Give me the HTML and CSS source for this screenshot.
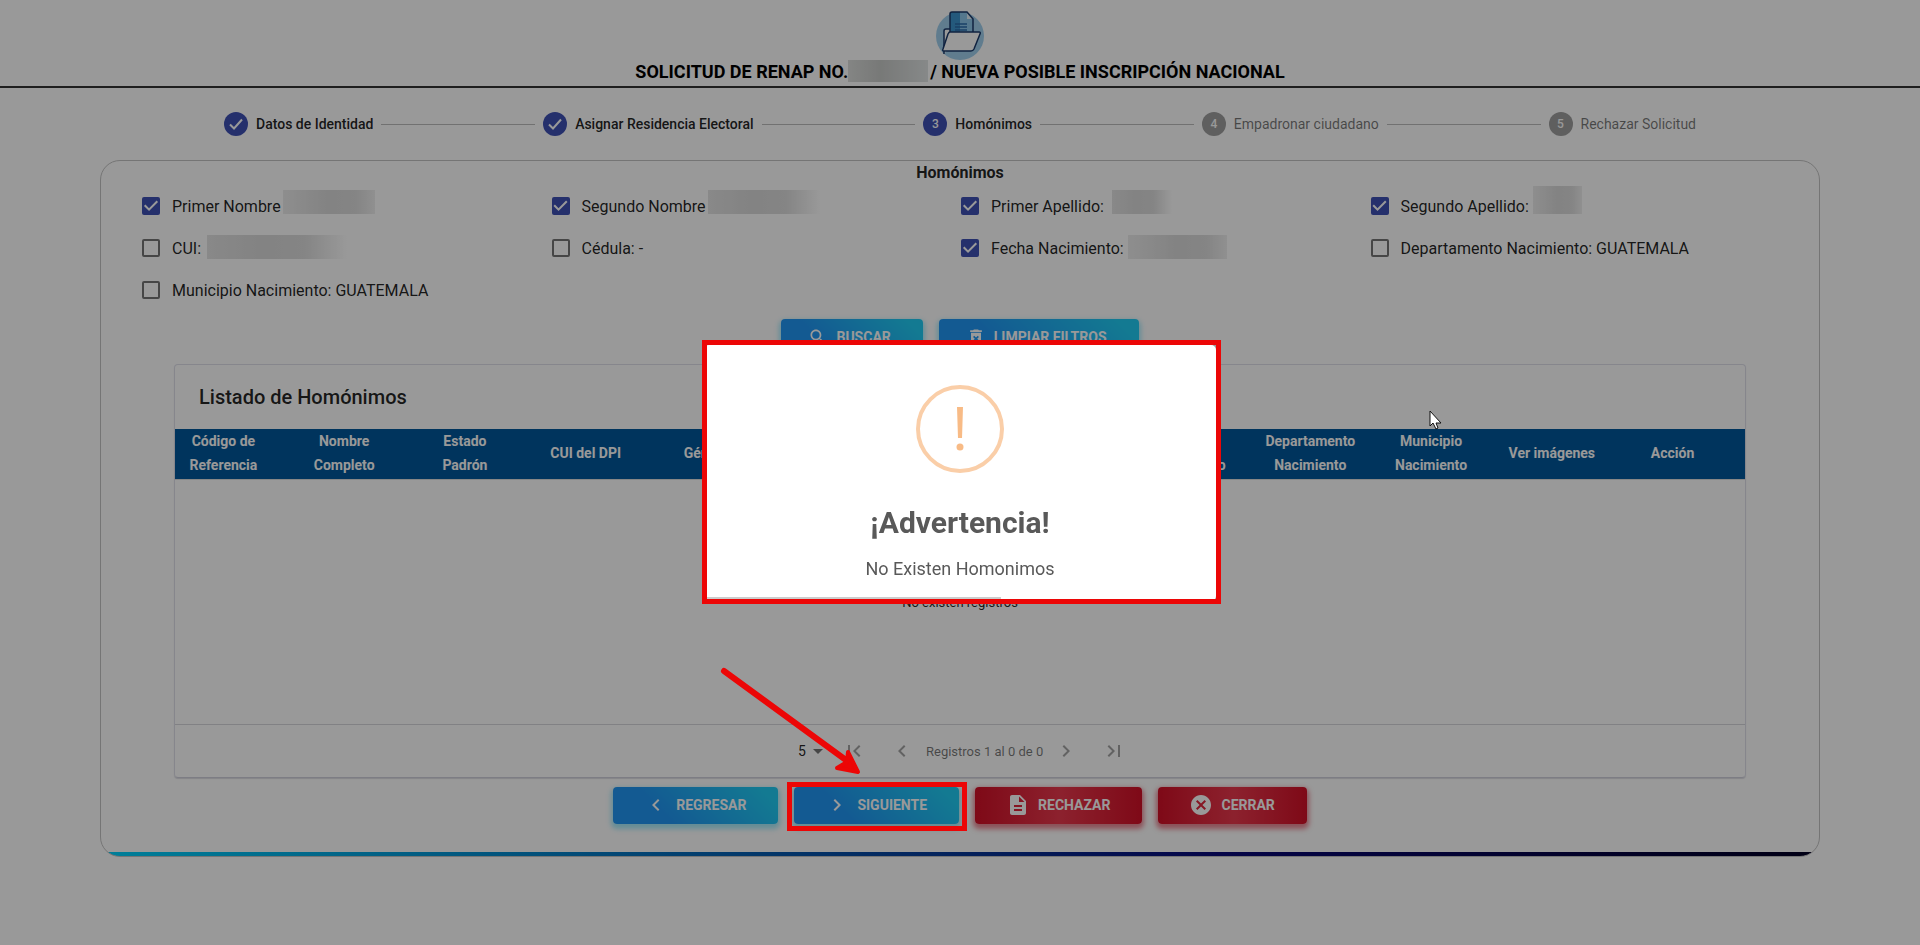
FILE: index.html
```html
<!DOCTYPE html>
<html lang="es">
<head>
    <meta charset="UTF-8">
    <meta name="viewport" content="width=device-width, initial-scale=1.0">
    <title>Homónimos</title>
    <link rel="stylesheet" href="styles.css">
</head>
<body>
    <header class="header">
        <svg class="logo" width="50" height="50" viewBox="0 0 50 50">
            <circle cx="25" cy="26" r="24" fill="#a0cfed"/>
            <path d="M9 44V21q0-2 2-2h6v16M36 25h3q2 0 2 2v6" fill="#fff" stroke="#1b3a6b" stroke-width="1.5"/>
            <path d="M15 36V4q0-2 2-2h15l6 7v27z" fill="#8cc6ec"/>
            <path d="M15 36V4q0-2 2-2h8v34z" fill="#3d94cf"/>
            <path d="M32 2v7h6z" fill="#e4f2fb"/>
            <path d="M15 36V4q0-2 2-2h15l6 7v27" fill="none" stroke="#1b3a6b" stroke-width="1.5"/>
            <path d="M20 14h12M20 17h12M20 20h12" stroke="#2b6cab" stroke-width="1.5"/>
            <path d="M15 22h29q2 0 1 2l-6 15q-1 2-3 2H9q-2 0-1-2l5-15q1-2 2-2z" fill="#fff" stroke="#1b3a6b" stroke-width="1.5"/>
        </svg>
        <h1 class="title">SOLICITUD DE RENAP NO.<span class="mask mask-title"></span>/ NUEVA POSIBLE INSCRIPCIÓN NACIONAL</h1>
    </header>

    <ol class="stepper">
        <li class="step done"><span class="step-icon"><svg width="24" height="24" viewBox="0 0 24 24"><path fill="none" stroke="#fff" stroke-width="2" d="M6 12.500l4 4 8-9"/></svg></span>Datos de Identidad</li>
        <li class="connector"></li>
        <li class="step done"><span class="step-icon"><svg width="24" height="24" viewBox="0 0 24 24"><path fill="none" stroke="#fff" stroke-width="2" d="M6 12.500l4 4 8-9"/></svg></span>Asignar Residencia Electoral</li>
        <li class="connector"></li>
        <li class="step done"><span class="step-icon">3</span>Homónimos</li>
        <li class="connector"></li>
        <li class="step"><span class="step-icon">4</span>Empadronar ciudadano</li>
        <li class="connector"></li>
        <li class="step"><span class="step-icon">5</span>Rechazar Solicitud</li>
    </ol>

    <main class="panel">
        <h2 class="panel-title">Homónimos</h2>

        <div class="filters">
            <label class="filter"><input type="checkbox" checked>Primer Nombre<span class="mask mask-name"></span></label>
            <label class="filter"><input type="checkbox" checked>Segundo Nombre<span class="mask mask-second-name fade"></span></label>
            <label class="filter"><input type="checkbox" checked>Primer Apellido:&nbsp;<span class="mask mask-surname fade"></span></label>
            <label class="filter"><input type="checkbox" checked>Segundo Apellido:<span class="mask mask-second-surname"></span></label>
            <label class="filter"><input type="checkbox">CUI:&nbsp;<span class="mask mask-cui fade low"></span></label>
            <label class="filter"><input type="checkbox">Cédula: -</label>
            <label class="filter"><input type="checkbox" checked>Fecha Nacimiento:<span class="mask mask-date low"></span></label>
            <label class="filter"><input type="checkbox">Departamento Nacimiento: GUATEMALA</label>
            <label class="filter"><input type="checkbox">Municipio Nacimiento: GUATEMALA</label>
        </div>

        <div class="buttons">
            <button class="button small-icon"><svg width="20" height="20" viewBox="0 0 24 24"><path d="M15.500 14h-.79l-.28-.27C15.410 12.590 16 11.110 16 9.500 16 5.910 13.090 3 9.500 3S3 5.910 3 9.500 5.910 16 9.500 16c1.610 0 3.090-.59 4.230-1.570l.27.28v.79l5 4.990L20.490 19l-4.990-5zm-6 0C7.010 14 5 11.990 5 9.500S7.010 5 9.500 5 14 7.010 14 9.500 11.990 14 9.500 14z"/></svg>BUSCAR</button>
            <button class="button small-icon"><svg width="20" height="20" viewBox="0 0 24 24"><path d="M6 19c0 1.100.9 2 2 2h8c1.100 0 2-.9 2-2V7H6v12zm2.460-7.120l1.410-1.410L12 12.590l2.120-2.120 1.410 1.410L13.410 14l2.120 2.120-1.410 1.410L12 15.410l-2.120 2.120-1.410-1.410L10.590 14l-2.130-2.120zM15.500 4l-1-1h-5l-1 1H5v2h14V4z"/></svg>LIMPIAR FILTROS</button>
        </div>

        <section class="listing">
            <h3 class="listing-title">Listado de Homónimos</h3>
            <table>
                <thead>
                    <tr>
                        <th>Código de Referencia</th>
                        <th>Nombre Completo</th>
                        <th>Estado<br>Padrón</th>
                        <th>CUI del DPI</th>
                        <th>Género</th>
                        <th></th>
                        <th></th>
                        <th></th>
                        <th>Fecha Nacimiento</th>
                        <th>Departamento Nacimiento</th>
                        <th>Municipio Nacimiento</th>
                        <th>Ver imágenes</th>
                        <th>Acción</th>
                    </tr>
                </thead>
                <tbody>
                    <tr>
                        <td colspan="13">No existen registros</td>
                    </tr>
                </tbody>
            </table>
            <div class="pagination">
                <div class="page-size">
                    <select aria-label="Registros por página"><option>5</option></select>
                    <svg width="24" height="24" viewBox="0 0 24 24"><path d="M7 10l5 5 5-5z"/></svg>
                </div>
                <button class="page-button" aria-label="Primera" disabled><svg width="24" height="24" viewBox="0 0 24 24"><path d="M18.410 16.590L13.820 12l4.590-4.590L17 6l-6 6 6 6zM6 6h2v12H6z"/></svg></button>
                <button class="page-button" aria-label="Anterior" disabled><svg width="24" height="24" viewBox="0 0 24 24"><path d="M15.410 7.410L14 6l-6 6 6 6 1.410-1.410L10.830 12z"/></svg></button>
                <span class="page-info">Registros 1 al 0 de 0</span>
                <button class="page-button" aria-label="Siguiente" disabled><svg width="24" height="24" viewBox="0 0 24 24"><path d="M10 6L8.590 7.410 13.170 12l-4.580 4.590L10 18l6-6z"/></svg></button>
                <button class="page-button" aria-label="Última" disabled><svg width="24" height="24" viewBox="0 0 24 24"><path d="M5.590 7.410L10.180 12l-4.590 4.590L7 18l6-6-6-6zM16 6h2v12h-2z"/></svg></button>
            </div>
        </section>

        <div class="buttons actions">
            <button class="button"><svg width="24" height="24" viewBox="0 0 24 24"><path d="M15.410 7.410L14 6l-6 6 6 6 1.410-1.410L10.830 12z"/></svg>REGRESAR</button>
            <div class="marked">
                <button class="button"><svg width="24" height="24" viewBox="0 0 24 24"><path d="M10 6L8.590 7.410 13.170 12l-4.580 4.590L10 18l6-6z"/></svg>SIGUIENTE</button>
                <span class="mark"></span>
                <svg class="arrow" width="150" height="112" viewBox="0 0 150 112">
                    <path d="M6 6L132 98" fill="none" stroke="#ec0606" stroke-width="6" stroke-linecap="round"/>
                    <path d="M130 87L140 107L119 103L129 97Z" fill="#ec0606" stroke="#ec0606" stroke-width="4" stroke-linejoin="round"/>
                </svg>
            </div>
            <button class="button danger"><svg width="24" height="24" viewBox="0 0 24 24"><path d="M14 2H6c-1.100 0-1.990.9-1.990 2L4 20c0 1.100.89 2 1.990 2H18c1.100 0 2-.9 2-2V8l-6-6zm2 16H8v-2h8v2zm0-4H8v-2h8v2zm-3-5V3.500L18.500 9H13z"/></svg>RECHAZAR</button>
            <button class="button danger"><svg width="24" height="24" viewBox="0 0 24 24"><path d="M12 2C6.470 2 2 6.470 2 12s4.470 10 10 10 10-4.470 10-10S17.530 2 12 2zm5 13.590L15.590 17 12 13.410 8.410 17 7 15.590 10.590 12 7 8.410 8.410 7 12 10.590 15.590 7 17 8.410 13.410 12 17 15.590z"/></svg>CERRAR</button>
        </div>
    </main>

    <div class="overlay">
        <div class="popup" role="dialog" aria-labelledby="popupTitle">
            <svg class="popup-icon" width="88" height="88" viewBox="0 0 88 88">
                <circle cx="44" cy="44" r="42" fill="none" stroke="#facea8" stroke-width="4"/>
                <path d="M41 22h6l-1 31h-4z" fill="#f8bb86"/>
                <circle cx="44" cy="62" r="3.500" fill="#f8bb86"/>
            </svg>
            <h2 class="popup-title" id="popupTitle">¡Advertencia!</h2>
            <div class="popup-text">No Existen Homonimos</div>
            <div class="timer"></div>
            <span class="popup-mark"></span>
        </div>
        <svg class="cursor" width="14" height="20" viewBox="0 0 14 20">
            <path d="M1 1v15l3-3 3 6 2-1-2-5h5z" fill="#fff" stroke="#111" stroke-width="1"/>
        </svg>
    </div>
</body>
</html>
```
FILE: styles.css
```css
* {
    box-sizing: border-box;
}

body {
    margin: 0;
    font-family: Roboto, sans-serif;
    font-size: 16px;
    color: rgba(0, 0, 0, 0.87);
    background-color: #fff;
}

h1, h2, h3 {
    margin: 0;
}

.header {
    display: flex;
    flex-direction: column;
    align-items: center;
    height: 88px;
    padding-top: 10px;
    border-bottom: 2px solid #333;
}

.logo {
    flex: none;
}

.title {
    display: flex;
    align-items: center;
    font-size: 18px;
    font-weight: 700;
    line-height: 22px;
    color: #000;
}

/* Hidden personal data */
.mask {
    flex: none;
    height: 24px;
    align-self: flex-end;
    margin: 0 0 13px 2px;
    background: linear-gradient(90deg, #ededed, #dadada 50%, #dedede 80%, #f0f0f0);
}

.mask.fade {
    background: linear-gradient(90deg, #e4e4e4, #dadada 40%, #dedede 70%, #fff);
}

.mask.low {
    margin-bottom: 10px;
}

.mask-title {
    width: 80px;
    height: 22px;
    margin: 0 2px 2px 0;
    background: linear-gradient(90deg, #dcdedc, #c8cac8 40%, #e0e4e4);
}

.mask-name {
    width: 92px;
}

.mask-second-name {
    width: 112px;
}

.mask-surname {
    width: 60px;
    margin-left: 4px;
}

.mask-second-surname {
    width: 49px;
    height: 28px;
    margin-left: 4px;
}

.mask-cui {
    width: 140px;
}

.mask-date {
    width: 99px;
    margin-left: 4px;
}

/* Stepper */
.stepper {
    display: flex;
    align-items: center;
    width: 80%;
    margin: 0 auto;
    padding: 24px;
    list-style: none;
}

.step {
    display: flex;
    align-items: center;
    gap: 8px;
    padding: 0 8px;
    font-size: 14px;
    line-height: 24px;
    color: rgba(0, 0, 0, 0.54);
}

.step-icon {
    display: flex;
    align-items: center;
    justify-content: center;
    width: 24px;
    height: 24px;
    border-radius: 50%;
    font-size: 12px;
    font-weight: 500;
    color: #fff;
    background-color: #9e9e9e;
}

.step.done {
    font-weight: 500;
    color: rgba(0, 0, 0, 0.87);
}

.step.done .step-icon {
    background-color: #3f51b5;
}

.connector {
    flex: 1;
    border-top: 1px solid #bdbdbd;
}

/* Panel */
.panel {
    margin: 0 100px;
    padding-bottom: 32px;
    border: 1px solid #c4c4c4;
    border-radius: 20px;
    background: linear-gradient(270deg, #020024 0%, #090979 35%, #00d4ff 100%) bottom / 100% 4px no-repeat;
}

.panel-title {
    font-size: 16px;
    font-weight: 700;
    line-height: 24px;
    text-align: center;
}

.filters {
    display: grid;
    grid-template-columns: repeat(4, 1fr);
    padding: 0 40px;
}

.filter {
    display: flex;
    align-items: center;
    height: 42px;
    white-space: nowrap;
}

.filter input {
    appearance: none;
    width: 18px;
    height: 18px;
    margin: 0 12px 0 1px;
    border: 2px solid rgba(0, 0, 0, 0.54);
    border-radius: 2px;
}

.filter input:checked {
    border: 0;
    background-color: #3f51b5;
}

.filter input:checked::after {
    content: "";
    display: block;
    height: 18px;
    background-color: #fff;
    clip-path: polygon(39% 78%, 11% 50%, 19% 42%, 39% 62%, 81% 20%, 89% 28%);
}

/* Buttons */
.buttons {
    display: flex;
    justify-content: center;
    gap: 16px;
    padding: 8px 0;
}

.actions {
    padding: 9px 0 0;
}

.button {
    display: flex;
    align-items: center;
    gap: 8px;
    height: 37px;
    padding: 0 32px 2px 31px;
    border: 0;
    border-radius: 4px;
    font-family: inherit;
    font-size: 14px;
    font-weight: 700;
    color: #fff;
    background: linear-gradient(45deg, #2196f3 30%, #21cbf3 90%);
    box-shadow: 0 3px 5px 2px rgba(33, 203, 243, 0.4);
}

.button.small-icon {
    padding-left: 27px;
}

.button.danger {
    background: linear-gradient(90deg, #d31027, #ea384d 51%, #d31027);
    box-shadow: 0 3px 5px 2px rgba(211, 16, 39, 0.5);
}

.button svg {
    fill: #fff;
}

/* Listing */
.listing {
    margin: 0 73px;
    border: 1px solid #e0e0ea;
    border-bottom-color: #d0d0dc;
    border-radius: 4px;
    box-shadow: 0 1px 1px rgba(0, 0, 40, 0.14);
}

.listing-title {
    padding: 0 24px;
    font-size: 20px;
    font-weight: 500;
    line-height: 64px;
}

table {
    width: 100%;
    table-layout: fixed;
    border-collapse: collapse;
}

th {
    height: 50px;
    padding: 0 24px 2px 0;
    font-size: 14px;
    font-weight: 700;
    line-height: 24px;
    color: #fff;
    background-color: #01579b;
}

td {
    height: 245px;
    padding: 0;
    font-size: 13px;
    text-align: center;
    border-top: 1px solid #e0e0e0;
    border-bottom: 1px solid #d8d8dc;
}

.pagination {
    display: flex;
    align-items: center;
    justify-content: center;
    height: 52px;
}

.page-size {
    display: flex;
    align-items: center;
    width: 48px;
    padding-left: 16px;
}

.page-size select {
    appearance: none;
    width: 8px;
    padding: 0;
    border: 0;
    font-family: inherit;
    font-size: 14px;
    color: inherit;
    background: none;
}

.page-size svg {
    flex: none;
    fill: rgba(0, 0, 0, 0.54);
}

.page-button {
    width: 48px;
    height: 48px;
    padding: 12px;
    border: 0;
    background: none;
}

.page-button svg {
    fill: rgba(0, 0, 0, 0.36);
}

.page-info {
    width: 116px;
    font-size: 13px;
    text-align: center;
    white-space: nowrap;
    color: rgba(0, 0, 0, 0.54);
}

/* Red marks, drawn above the overlay */
.marked {
    position: relative;
}

.mark {
    position: absolute;
    z-index: 20;
    inset: -5px -8px -7px -7px;
    border: 5px solid #ec0606;
}

.arrow {
    position: absolute;
    z-index: 20;
    left: -76px;
    top: -122px;
}

/* Alert */
.overlay {
    position: fixed;
    z-index: 10;
    inset: 0;
    display: flex;
    align-items: center;
    justify-content: center;
    background-color: rgba(0, 0, 0, 0.4);
}

.popup {
    position: relative;
    display: flex;
    flex-direction: column;
    align-items: center;
    width: 512px;
    padding-top: 40px;
    border-radius: 5px;
    color: #595959;
    background-color: #fff;
}

.popup-title {
    margin-top: 30px;
    font-size: 30px;
    font-weight: 700;
    line-height: 40px;
}

.popup-text {
    margin: 14px 0 16px;
    font-size: 18px;
    line-height: 24px;
}

.timer {
    align-self: flex-start;
    width: 58%;
    height: 4px;
    background-color: #ccc;
}

.popup-mark {
    position: absolute;
    inset: -5px -5px -3px -2px;
    border: 5px solid #ec0606;
}

.cursor {
    position: absolute;
    left: 1429px;
    top: 410px;
}
```
